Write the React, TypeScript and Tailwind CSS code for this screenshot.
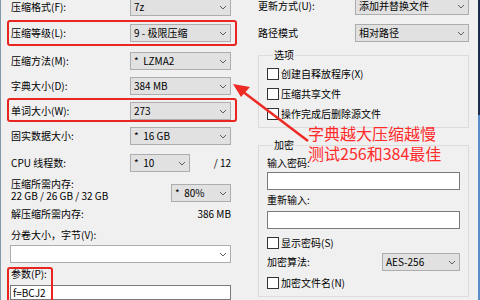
import React from "react";

const FONT = { fontFamily: '"Noto Sans CJK SC", "Noto Sans", sans-serif' };

function Chevron() {
  return (
    <svg width="8" height="5" viewBox="0 0 8 5" className="shrink-0">
      <path d="M1 1 L4 4 L7 1" fill="none" stroke="#606060" strokeWidth="1" />
    </svg>
  );
}

function Combo({ text, className }: { text: string; className: string }) {
  return (
    <div
      className={
        "flex items-center justify-between border border-[#adadad] bg-[#e1e1e1] pl-[3px] pr-[3px] shrink-0 " +
        className
      }
    >
      <span className="whitespace-pre">{text}</span>
      <Chevron />
    </div>
  );
}

function Check({ label, className }: { label: string; className: string }) {
  return (
    <div className={"flex items-center h-[12px] " + className}>
      <div className="w-[12px] h-[12px] border border-[#333] bg-white shrink-0" />
      <span className="ml-[2px]">{label}</span>
    </div>
  );
}

function LRow({ label, value, className }: { label: string; value: string; className: string }) {
  return (
    <div className={"flex items-center h-[18px] " + className}>
      <span className="w-[119px] shrink-0">{label}</span>
      <Combo text={value} className="w-[101px] h-[18px]" />
    </div>
  );
}

export default function App() {
  return (
    <div
      className="relative w-[480px] h-[300px] overflow-hidden bg-[#f0f0f0] flex text-[10px] leading-[12px] text-black"
      style={FONT}
    >
      <div className="w-[1px] h-full bg-[#8199a6] shrink-0" />
      {/* left column */}
      <div className="ml-[10px] w-[220px] shrink-0 flex flex-col mt-[-2px]">
        <LRow label="压缩格式(F):" value="7z" className="" />
        <LRow label="压缩等级(L):" value="9 - 极限压缩" className="mt-[8px]" />
        <LRow label="压缩方法(M):" value="*  LZMA2" className="mt-[10px]" />
        <LRow label="字典大小(D):" value="384 MB" className="mt-[7px]" />
        <LRow label="单词大小(W):" value="273" className="mt-[7px]" />
        <LRow label="固实数据大小:" value="*  16 GB" className="mt-[7px]" />
        <div className="flex items-center h-[18px] mt-[9px]">
          <span className="w-[119px] shrink-0">CPU 线程数:</span>
          <Combo text="*  10" className="w-[60px] h-[18px]" />
          <span className="flex-1 text-right">/ 12</span>
        </div>
        <div className="flex items-end mt-[6px]">
          <div className="flex-1 flex flex-col">
            <span>压缩所需内存:</span>
            <span>22 GB / 26 GB / 32 GB</span>
          </div>
          <Combo text="*  80%" className="w-[60px] h-[18px]" />
        </div>
        <div className="flex justify-between mt-[6px]">
          <span>解压缩所需内存:</span>
          <span>386 MB</span>
        </div>
        <span className="mt-[9px]">分卷大小，字节(V):</span>
        <Combo text="" className="w-[221px] h-[18px] mt-[4px] ml-[-1px] bg-white" />
        <span className="mt-[5px]">参数(P):</span>
        <div className="mt-[5px] ml-[-1px] w-[221px] h-[20px] bg-white border border-[#7a7a7a] flex items-center pl-[2px]">
          f=BCJ2
        </div>
      </div>

      {/* right column */}
      <div className="ml-[27px] w-[211px] shrink-0 flex flex-col mt-[-3px]">
        <div className="flex items-center h-[18px]">
          <span className="w-[97px] shrink-0">更新方式(U):</span>
          <Combo text="添加并替换文件" className="w-[114px] h-[18px]" />
        </div>
        <div className="flex items-center h-[18px] mt-[9px]">
          <span className="w-[97px] shrink-0">路径模式</span>
          <Combo text="相对路径" className="w-[114px] h-[18px]" />
        </div>
        <fieldset className="mt-[7px] border border-[#dcdcdc] pl-[8px] pb-[7px]">
          <legend className="ml-[6px] px-[1px] leading-[12px]">选项</legend>
          <Check label="创建自释放程序(X)" className="mt-[7px]" />
          <Check label="压缩共享文件" className="mt-[8px]" />
          <Check label="操作完成后删除源文件" className="mt-[8px]" />
        </fieldset>
        <fieldset className="mt-[11px] border border-[#dcdcdc] pl-[8px] pb-[7px]">
          <legend className="ml-[6px] px-[1px] leading-[12px]">加密</legend>
          <span className="block mt-[6px]">输入密码:</span>
          <div className="mt-[3px] w-[193px] h-[18px] bg-white border border-[#7a7a7a]" />
          <span className="block mt-[4px]">重新输入:</span>
          <div className="mt-[5px] w-[193px] h-[18px] bg-white border border-[#7a7a7a]" />
          <Check label="显示密码(S)" className="mt-[8px]" />
          <div className="flex items-center h-[18px] mt-[4px]">
            <span className="w-[115px] shrink-0">加密算法:</span>
            <Combo text="AES-256" className="w-[78px] h-[18px]" />
          </div>
          <Check label="加密文件名(N)" className="mt-[6px]" />
        </fieldset>
      </div>

      <div className="flex-1" />
      <div className="w-[2px] h-full flex flex-col shrink-0">
        <div className="h-[115px] bg-[#1d2c4a]" />
        <div className="flex-1 bg-[#5a8ccc]" />
      </div>

      {/* annotations */}
      <div className="absolute left-[7px] top-[20px] w-[230px] h-[26px] border-2 border-[#e8261f] rounded-[3px]" />
      <div className="absolute left-[7px] top-[98px] w-[230px] h-[24px] border-2 border-[#e8261f] rounded-[3px]" />
      <div className="absolute left-[7px] top-[267px] w-[46px] h-[40px] border-2 border-[#e8261f] rounded-[3px]" />
      <svg className="absolute left-0 top-0" width="480" height="300" viewBox="0 0 480 300">
        <line x1="242" y1="91" x2="308" y2="141" stroke="#ee2a24" strokeWidth="2.5" />
        <polygon points="233,84 250,87 241,97" fill="#ee2a24" />
      </svg>
      <div className="absolute left-[308px] top-[123px] text-[16px] leading-[20px] text-[#ff2b2b]">
        <div>字典越大压缩越慢</div>
        <div>测试256和384最佳</div>
      </div>
    </div>
  );
}
